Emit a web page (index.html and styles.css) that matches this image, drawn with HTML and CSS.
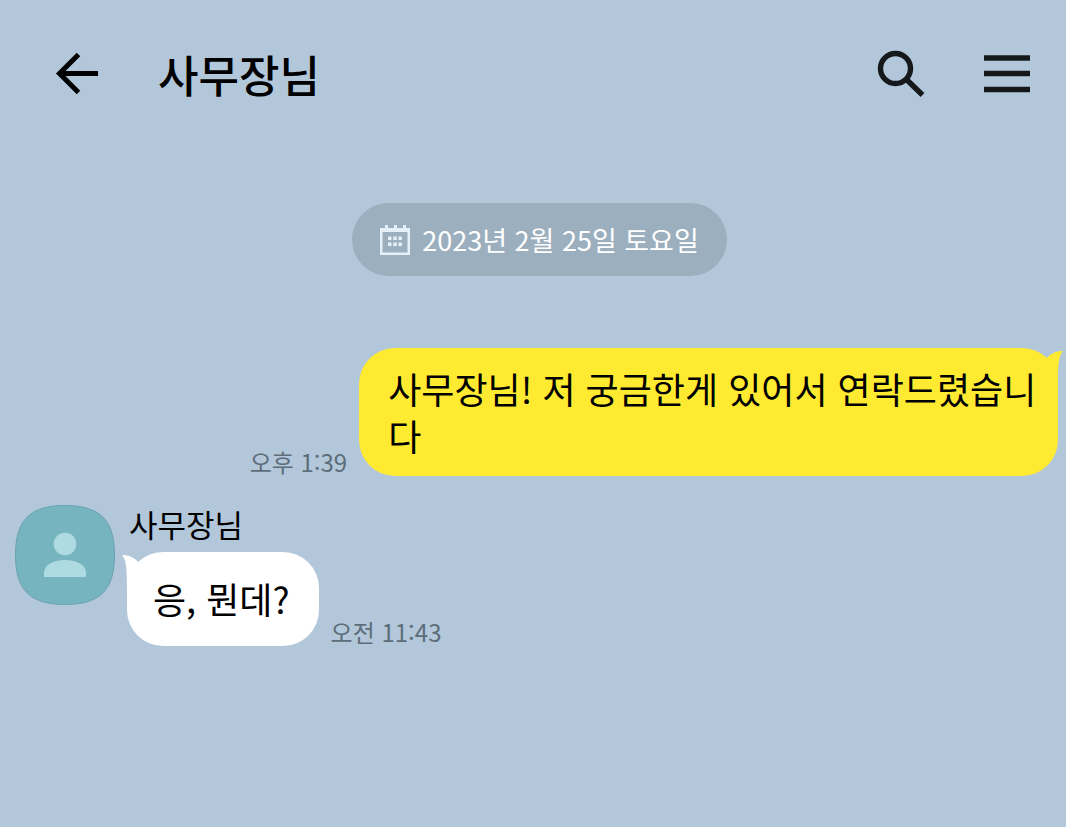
FILE: index.html
```html
<!DOCTYPE html>
<html lang="ko">

<head>
  <meta charset="UTF-8" />
  <meta name="viewport" content="width=device-width, initial-scale=1.0" />
  <title>사무장님</title>
  <link rel="stylesheet" href="styles.css">
</head>

<body>
  <header class="header">
    <button class="icon-btn" type="button" aria-label="뒤로">
      <svg width="44" height="44" viewBox="0 0 44 44" fill="none" stroke="#000" stroke-width="5">
        <path d="M44 21.500H5M24.500 2.500L5.500 21.500l19 19" />
      </svg>
    </button>
    <h1 class="title">사무장님</h1>
    <button class="icon-btn" type="button" aria-label="검색">
      <svg width="48" height="48" viewBox="0 0 48 48" fill="none" stroke="#15191c" stroke-width="5.400">
        <circle cx="18.500" cy="18.500" r="15" />
        <path d="M29 29l16.500 16" />
      </svg>
    </button>
    <button class="icon-btn menu" type="button" aria-label="메뉴">
      <svg width="46" height="46" viewBox="0 0 46 46" fill="none" stroke="#15191c" stroke-width="5.400">
        <path d="M0 7h46M0 22.500h46M0 38.500h46" />
      </svg>
    </button>
  </header>

  <main class="chat">
    <div class="date">
      <button class="date-btn" type="button">
        <svg width="30" height="30" viewBox="0 0 30 30" fill="#e6f0f8">
          <path fill-rule="evenodd" d="M0 3h5V0h3v3h6V0h3v3h6V0h3v3h4v27H0zM2.500 7v20.500h25V7z" />
          <path d="M8 11.500h3.500V15H8zM13.300 11.500h3.500V15h-3.500zM18.500 11.500H22V15h-3.500zM8 17.500h3.500V21H8zM13.300 17.500h3.500V21h-3.500zM18.500 17.500H22V21h-3.500z" />
        </svg>
        <span>2023년 2월 25일 토요일</span>
      </button>
    </div>

    <div class="row me">
      <time class="time">오후 1:39</time>
      <div class="bubble">
        <p>사무장님! 저 궁금한게 있어서 연락드렸습니다</p>
        <svg class="tail" width="20" height="36" viewBox="0 0 20 36" fill="#ffea32">
          <path d="M4 9.500C9 5 14 3 20 3C16 8 15 14 15 36H0z" />
        </svg>
      </div>
    </div>

    <div class="row other">
      <svg class="avatar" width="100" height="100" viewBox="0 0 100 100">
        <path fill="#76b4bf" stroke="#6aa3b0" d="M50 .5C85 .5 99.500 15 99.500 50S85 99.500 50 99.500.5 85 .5 50 15 .5 50 .5z" />
        <circle cx="50" cy="39" r="11.300" fill="#addbe1" />
        <path fill="#addbe1" d="M29 72v-4C29 60 38 55 50 55s21 5 21 13v4z" />
      </svg>
      <div class="body">
        <p class="name">사무장님</p>
        <div class="line">
          <div class="bubble">
            <p>응, 뭔데?</p>
            <svg class="tail" width="20" height="36" viewBox="0 0 20 36" fill="#fff">
              <path d="M16 9.500C11 5 6 3 0 3C4 8 5 14 5 36H20z" />
            </svg>
          </div>
          <time class="time">오전 11:43</time>
        </div>
      </div>
    </div>
  </main>
</body>

</html>
```
FILE: styles.css
```css
* {
  margin: 0;
  padding: 0;
  box-sizing: border-box;
}

body {
  min-height: 100vh;
  background: #b2c7da;
  color: #000;
  font-family: "Noto Sans CJK KR", sans-serif;
}

button {
  border: none;
  background: none;
  font-family: inherit;
  cursor: pointer;
}

svg {
  display: block;
}

/* 상단 바 */
.header {
  display: flex;
  align-items: center;
  height: 148px;
  padding: 0 36px 0 54px;
}

.title {
  flex: 1;
  margin-left: 60px;
  font-size: 44px;
  font-weight: 500;
  line-height: 60px;
}

.menu {
  margin-left: 59px;
}

/* 대화 목록 */
.chat {
  padding: 55px 8px 0 15px;
}

.date {
  display: flex;
  justify-content: center;
  margin-bottom: 72px;
  padding-left: 6px;
}

.date-btn {
  display: flex;
  align-items: center;
  gap: 12px;
  padding: 16px 28px;
  border-radius: 37px;
  background: #9cafbe;
  color: #fff;
  font-size: 27px;
  line-height: 41px;
}

.row {
  display: flex;
}

.me {
  justify-content: flex-end;
  align-items: flex-end;
  gap: 12px;
  margin-bottom: 29px;
}

.bubble {
  position: relative;
  padding: 17px 16px 17px 29px;
  border-radius: 36px;
  font-size: 36px;
  line-height: 47px;
  word-break: break-all;
}

.me .bubble {
  max-width: 67%;
  background: #ffea32;
}

.tail {
  position: absolute;
  top: 0;
}

.me .tail {
  right: -5px;
}

.time {
  color: #5d6d79;
  font-size: 24px;
  line-height: 28px;
  white-space: nowrap;
}

.other {
  gap: 12px;
}

.name {
  padding-left: 2px;
  font-size: 31px;
  line-height: 38px;
}

.line {
  display: flex;
  align-items: flex-end;
  gap: 12px;
  margin-top: 9px;
}

.other .bubble {
  padding: 23px 29px 24px 26px;
  background: #fff;
}

.other .tail {
  left: -5px;
}
```
